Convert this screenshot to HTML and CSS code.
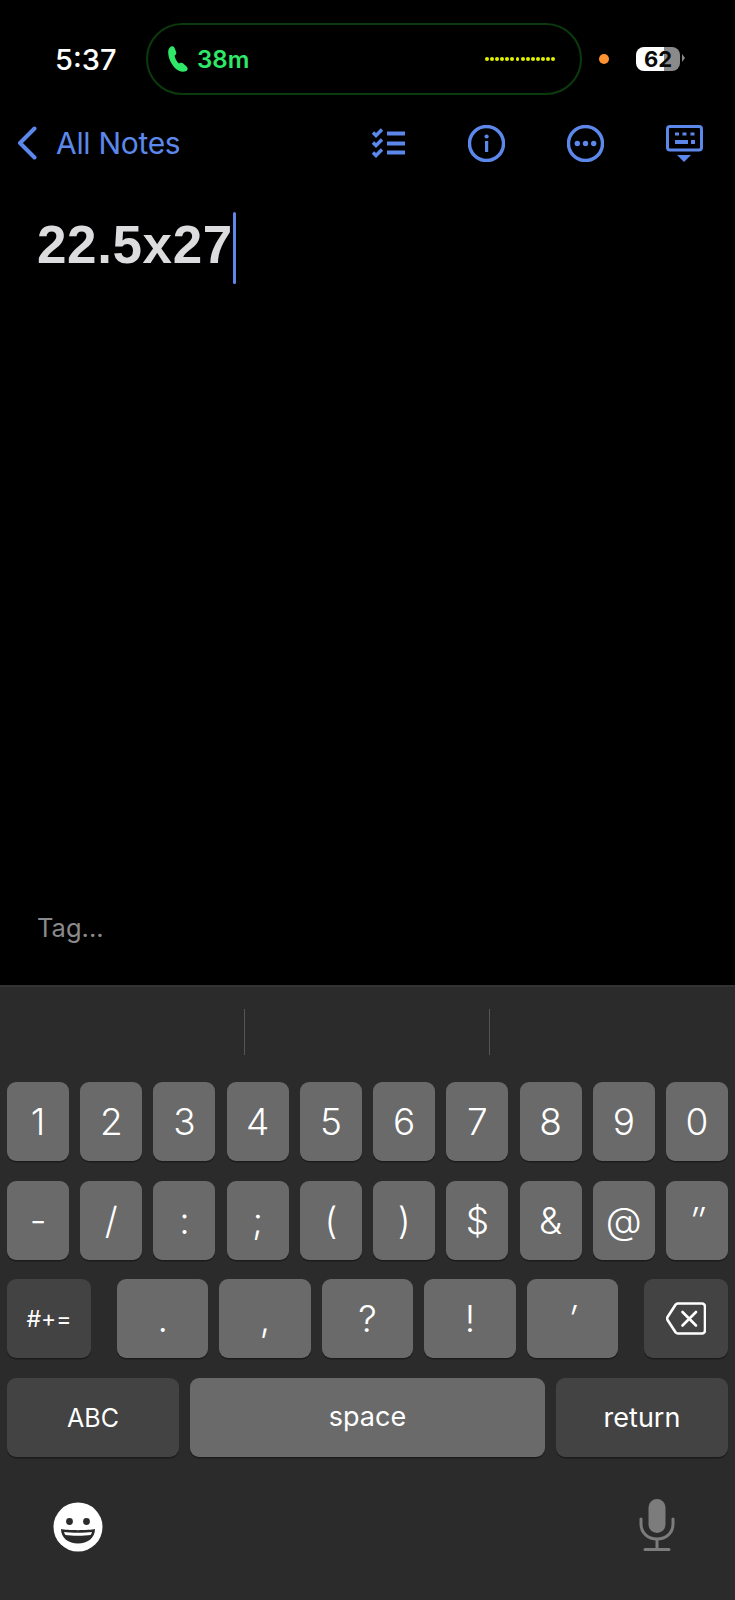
FILE: index.html
```html
<!DOCTYPE html>
<html lang="en">
<head>
<meta charset="utf-8">
<title>22.5x27</title>
<link rel="stylesheet" href="styles.css">
</head>
<body>
<div class="screen">
  <header class="status">
    <span class="time">5:37</span>
    <div class="pill">
      <svg class="phone" viewBox="0 0 20 26"><path d="M1.800 1.400 C3.400 -.2 5.800 .1 6.600 2 L8.200 6.200 C8.600 7.500 8 8.400 7.200 9.100 L6.600 9.700 C7 12.400 8.800 15.800 11 17.600 L12 17 C13 16.500 14.200 16.600 15.200 17.400 L18.800 20.800 C20.200 22.200 19.800 24.200 18.200 25.100 C16.400 26.200 13.200 26.200 10.400 24.600 C4.800 21.400 .4 13.600 .2 6.800 C.1 4.400 .6 2.600 1.800 1.400 Z"/></svg>
      <span class="call">38m</span>
      <div class="wave"><i></i><i></i><i></i><i></i><i></i><i></i><i></i><i></i><i></i><i></i><i></i><i></i><i></i><i></i></div>
    </div>
    <span class="mic-dot"></span>
    <div class="battery"><span class="battery-level">62</span></div>
    <span class="battery-cap"></span>
  </header>

  <nav class="nav">
    <svg class="chevron" viewBox="0 0 20 34"><path d="M17.500 2.500 3 17l14.500 14.500"/></svg>
    <span class="back">All Notes</span>
    <div class="tools">
      <svg class="tool" viewBox="0 0 37 37"><path class="check" d="M4 7.500l3 3 6-6M4 17.500l3 3 6-6M4 27.500l3 3 6-6"/><path class="lines" d="M18 8.500h18M18 18.500h18M18 27.500h18"/></svg>
      <svg class="tool" viewBox="0 0 37 37"><circle class="ring" cx="18.500" cy="18.500" r="17"/><rect class="solid" x="17" y="16" width="3.200" height="11"/><circle class="solid" cx="18.600" cy="11.500" r="2.100"/></svg>
      <svg class="tool" viewBox="0 0 37 37"><circle class="ring" cx="18.500" cy="18.500" r="17"/><circle class="solid" cx="10.300" cy="18.500" r="2.700"/><circle class="solid" cx="18.500" cy="18.500" r="2.700"/><circle class="solid" cx="26.700" cy="18.500" r="2.700"/></svg>
      <svg class="tool" viewBox="0 0 37 37"><rect class="frame" x="1.500" y="1.500" width="34" height="23.500" rx="2.500"/><g class="solid"><rect x="9" y="7.500" width="4" height="3"/><rect x="16.500" y="7.500" width="4" height="3"/><rect x="24.500" y="7.500" width="4" height="3"/><rect x="9" y="15" width="13" height="4"/><rect x="25" y="15" width="4" height="4"/><path d="M11 30h14l-7 7z"/></g></svg>
    </div>
  </nav>

  <main class="note">
    <h1 class="title"><span class="title-text">22.5x27</span><span class="caret"></span></h1>
    <p class="tag">Tag...</p>
  </main>

  <section class="keyboard">
    <div class="suggest"><span class="sep"></span><span class="sep"></span></div>
    <div class="row tens">
      <div class="key">1</div><div class="key">2</div><div class="key">3</div><div class="key">4</div><div class="key">5</div>
      <div class="key">6</div><div class="key">7</div><div class="key">8</div><div class="key">9</div><div class="key">0</div>
    </div>
    <div class="row tens">
      <div class="key">-</div><div class="key">/</div><div class="key">:</div><div class="key">;</div><div class="key">(</div>
      <div class="key">)</div><div class="key">$</div><div class="key">&amp;</div><div class="key">@</div><div class="key slant">″</div>
    </div>
    <div class="row third">
      <div class="key dark small">#+=</div>
      <div class="five">
        <div class="key">.</div><div class="key">,</div><div class="key">?</div><div class="key">!</div><div class="key slant">′</div>
      </div>
      <div class="key dark">
        <svg class="del" viewBox="0 0 40 33"><path class="del-out" d="M12 1.500h24a3 3 0 0 1 3 3v24a3 3 0 0 1-3 3H12a3 3 0 0 1-2.300-1L1.700 18.200a3 3 0 0 1 0-3.400L9.700 2.500a3 3 0 0 1 2.300-1z"/><path class="del-x" d="M16.500 10l13.500 13.500M30 10 16.500 23.500"/></svg>
      </div>
    </div>
    <div class="row bottom">
      <div class="key dark word abc">ABC</div>
      <div class="key word space">space</div>
      <div class="key dark word">return</div>
    </div>
    <div class="extras">
      <svg class="emoji" viewBox="0 0 50 50"><circle cx="25" cy="25" r="24.500" fill="#fff"/><circle cx="16.500" cy="19.500" r="3.400" fill="#2b2b2b"/><circle cx="33.500" cy="19.500" r="3.400" fill="#2b2b2b"/><path d="M8 27c5.500 1.500 28.500 1.500 34 0 0 9-7.500 14.500-17 14.500S8 36 8 27z" fill="#2b2b2b"/><path d="M11 30c6 1 22 1 28 0-.5 1.500-1 2.500-1.500 3-6 1-19 1-25 0-.5-.5-1-1.500-1.500-3z" fill="#fff"/></svg>
      <svg class="mic" viewBox="0 0 36 52"><rect x="9.500" y="0" width="17" height="34" rx="8.500" fill="#7c7c7c"/><path d="M2 20v5c0 9 7 15 16 15s16-6 16-15v-5M18 40v9M6 50.500h24" fill="none" stroke="#7c7c7c" stroke-width="3" stroke-linecap="round"/></svg>
    </div>
  </section>
</div>
</body>
</html>
```
FILE: styles.css
```css
* { box-sizing: border-box; margin: 0; padding: 0; }
html, body { background: #000; }
body { width: 735px; height: 1600px; overflow: hidden; font-family: Inter, "Liberation Sans", sans-serif; }
.screen { width: 735px; height: 1600px; display: flex; flex-direction: column; background: #000; }

.status { height: 96px; padding: 23px 0 0 55px; display: flex; align-items: flex-start; }
.time { width: 91px; height: 72px; line-height: 73px; font-size: 29px; font-weight: 500; color: #fff; }
.pill { width: 436px; height: 72px; border: 2px solid #0b3a0c; border-radius: 36px; padding: 0 25px 0 20px; display: flex; align-items: center; }
.phone { width: 20px; height: 26px; fill: #2fe868; }
.call { margin-left: 9px; font-size: 24px; font-weight: 600; color: #2fe868; }
.wave { margin-left: auto; display: flex; gap: 1.200px; }
.wave i { width: 3.900px; height: 3.900px; border-radius: 50%; background: #dff200; }
.mic-dot { width: 10px; height: 10px; margin: 31px 0 0 17px; border-radius: 50%; background: #ff9233; }
.battery { width: 44px; height: 24px; margin: 24px 0 0 27px; border-radius: 8px; background: linear-gradient(90deg, #fff 0 64%, #8a8a8a 64%); display: flex; align-items: center; justify-content: center; }
.battery-level { font-size: 22px; font-weight: 700; color: #0a0a0a; line-height: 24px; }
.battery-cap { width: 0; height: 0; margin: 31px 0 0 2px; border-left: 3px solid #8a8a8a; border-top: 4px solid transparent; border-bottom: 4px solid transparent; }

.nav { height: 46px; margin-top: 24px; padding: 0 32px 0 17px; display: flex; align-items: center; color: #5c88ec; }
.chevron { width: 20px; height: 34px; fill: none; stroke: #5c88ec; stroke-width: 4; stroke-linecap: round; stroke-linejoin: round; }
.back { margin-left: 19px; font-size: 30px; line-height: 46px; letter-spacing: -.3px; }
.tools { margin-left: auto; display: flex; align-items: center; gap: 62px; }
.tool { width: 37px; height: 37px; display: block; }
.check { fill: none; stroke: #5c88ec; stroke-width: 3.500; }
.lines { fill: none; stroke: #5c88ec; stroke-width: 4; }
.ring { fill: none; stroke: #5c88ec; stroke-width: 3.400; }
.frame { fill: none; stroke: #5c88ec; stroke-width: 3; }
.solid { fill: #5c88ec; }

.note { flex: 1; padding: 46px 0 0 37px; display: flex; flex-direction: column; justify-content: space-between; }
.title { font-family: "Liberation Sans", Arial, sans-serif; font-size: 53px; font-weight: 700; letter-spacing: .6px; line-height: 72px; color: #dcdcde; display: flex; align-items: flex-start; }
.title-text { line-height: 66px; }
.caret { width: 3.500px; height: 72px; border-radius: 2px; background: #5c88ec; }
.tag { margin-bottom: 42px; font-size: 25.500px; line-height: 30px; color: #8a8a8c; }

.keyboard { height: 615px; padding: 0 7px; background: #2b2b2b; border-top: 2px solid #333; display: flex; flex-direction: column; }
.suggest { height: 95px; padding-top: 22px; margin-left: -7px; display: flex; }
.sep { width: 1px; height: 46px; background: #555; margin-left: 244px; }
.row { height: 79px; margin-bottom: 19.700px; }
.tens { display: grid; grid-template-columns: repeat(10, 1fr); column-gap: 11.200px; }
.third { display: flex; justify-content: space-between; }
.third > .key { width: 84px; }
.five { flex: 1; margin: 0 26px; display: grid; grid-template-columns: repeat(5, 1fr); column-gap: 11px; }
.bottom { display: grid; grid-template-columns: 172px 1fr 172px; column-gap: 11px; margin-bottom: 0; }
.key { height: 79px; border-radius: 9px; background: #6a6a6a; box-shadow: 0 1.500px 0 #1c1c1c; color: #fff; font-size: 37px; font-weight: 300; display: flex; align-items: center; justify-content: center; }
.slant { font-style: italic; }
.dark { background: #434343; }
.small { font-size: 23px; font-weight: 400; }
.word { font-size: 27px; font-weight: 400; }
.abc { font-size: 25px; }
.space { padding-bottom: 3px; }
.del { width: 40px; height: 33px; }
.del-out { fill: none; stroke: #fff; stroke-width: 2.600; stroke-linejoin: round; }
.del-x { fill: none; stroke: #fff; stroke-width: 2.600; stroke-linecap: round; }
.extras { display: flex; justify-content: space-between; align-items: flex-start; padding: 42px 53px 0 46px; }
.emoji { width: 50px; height: 50px; margin-top: 3px; }
.mic { width: 36px; height: 52px; }
```
